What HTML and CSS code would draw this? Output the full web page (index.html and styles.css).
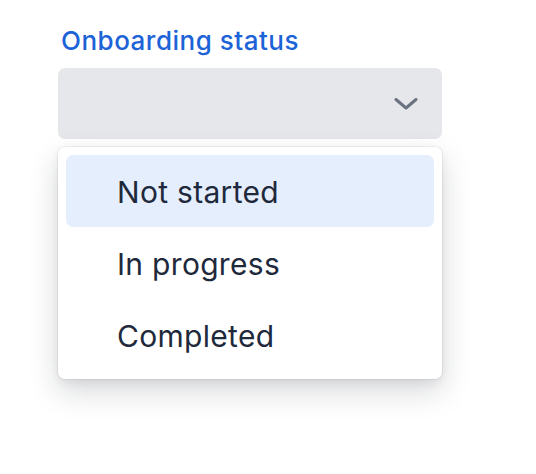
FILE: index.html
```html
<!DOCTYPE html>
<html lang="en">
<head>
<meta charset="utf-8">
<link rel="stylesheet" href="styles.css">
</head>
<body>
<div class="field">
  <div class="label">Onboarding status</div>
  <div class="select">
    <svg class="chev" width="24" height="12" viewBox="0 0 24 12"><path d="M2 1.5 L12 10 L22 1.5" fill="none" stroke="#6b7280" stroke-width="3" stroke-linecap="round" stroke-linejoin="round"/></svg>
  </div>
  <div class="menu">
    <div class="option active">Not started</div>
    <div class="option">In progress</div>
    <div class="option">Completed</div>
  </div>
</div>
</body>
</html>
```
FILE: styles.css
```css
html, body { margin: 0; padding: 0; background: #fff; }
body { font-family: Inter, "Noto Sans", sans-serif; min-height: 474px; }
.field { width: 384px; padding: 24px 0 80px 58px; }
.label { font-size: 26px; font-weight: 500; line-height: 34px; letter-spacing: 0.5px; color: #1d63d8; padding-left: 3px; margin-bottom: 10px; }
.select { height: 71px; background: #e5e7eb; border-radius: 7px; display: flex; align-items: center; justify-content: flex-end; padding-right: 24px; }
.chev { display: block; margin-top: 1px; }
.menu { margin-top: 8px; background: #fff; border-radius: 7px; padding: 8px; box-shadow: 0 0 0 1px rgba(0,0,0,0.05), 0 12px 30px rgba(15,23,42,0.17), 0 4px 10px rgba(15,23,42,0.06); }
.option { height: 72px; display: flex; align-items: center; padding-left: 51px; padding-top: 2px; box-sizing: border-box; font-size: 30px; letter-spacing: 0.3px; color: #1e293b; border-radius: 7px; }
.option.active { background: #e4eefd; }
```
